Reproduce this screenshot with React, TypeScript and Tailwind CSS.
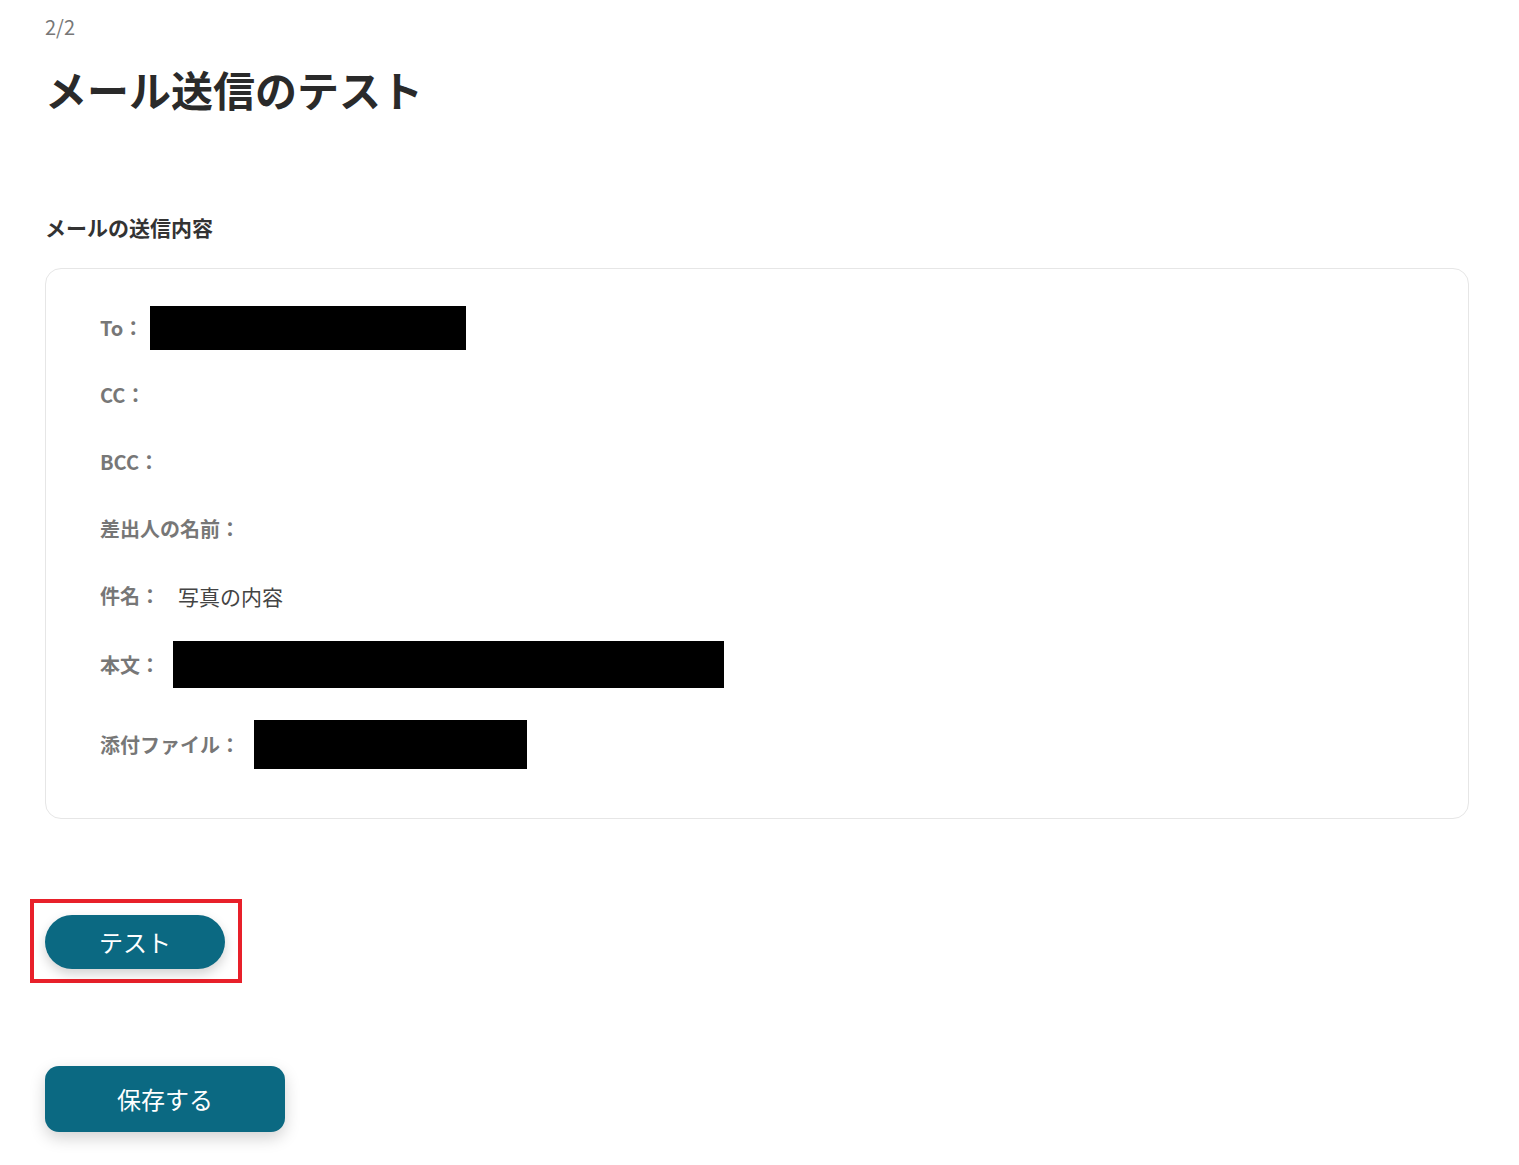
import React from 'react';

const font = { fontFamily: '"Noto Sans CJK JP", "Noto Sans", sans-serif' };

function Redacted({ w, h }: { w: number; h: number }) {
  return <div className="bg-black" style={{ width: w, height: h }} />;
}

export default function App() {
  const label = 'text-[20px] font-bold text-[#777777] leading-none whitespace-nowrap';

  return (
    <div className="min-h-[1165px] bg-white px-[45px] pt-[14px]" style={font}>
      <div className="text-[20px] leading-[26px] text-[#777777]">2/2</div>
      <h1 className="mt-[21px] text-[42px] font-bold leading-[56px] text-[#2a2a2a]">メール送信のテスト</h1>

      <h2 className="mt-[96px] text-[21px] font-bold leading-[28px] text-[#333333]">メールの送信内容</h2>

      <div className="mt-[27px] w-[1424px] rounded-[16px] border border-[#e6e6e6] px-[54px] pt-[37px] pb-[49px]">
        <div className="flex flex-col gap-[23px]">
          <div className="flex h-[44px] items-center">
            <span className={label}>To：</span>
            <div className="ml-[7px]"><Redacted w={316} h={44} /></div>
          </div>
          <div className="flex h-[44px] items-center">
            <span className={label}>CC：</span>
          </div>
          <div className="flex h-[44px] items-center">
            <span className={label}>BCC：</span>
          </div>
          <div className="flex h-[44px] items-center">
            <span className={label}>差出人の名前：</span>
          </div>
          <div className="flex h-[44px] items-center">
            <span className={label}>件名：</span>
            <span className="ml-[18px] text-[21px] leading-none text-[#444444]">写真の内容</span>
          </div>
          <div className="flex h-[47px] items-center">
            <span className={label}>本文：</span>
            <div className="ml-[13px]"><Redacted w={551} h={47} /></div>
          </div>
          <div className="mt-[9px] flex h-[49px] items-center">
            <span className={label}>添付ファイル：</span>
            <div className="ml-[14px]"><Redacted w={273} h={49} /></div>
          </div>
        </div>
      </div>

      <div className="mt-[80px] -ml-[15px] inline-block border-[4px] border-[#e8202a] pl-[11px] pr-[13px] pt-[12px] pb-[10px]">
        <button className="flex h-[54px] w-[180px] items-center justify-center rounded-full bg-[#0b6982] text-[24px] text-white shadow-[0_5px_12px_rgba(0,0,0,0.18)]">
          テスト
        </button>
      </div>

      <div className="mt-[83px]">
        <button className="flex h-[66px] w-[240px] items-center justify-center rounded-[14px] bg-[#0b6982] text-[24px] text-white shadow-[0_6px_16px_rgba(0,0,0,0.18)]">
          保存する
        </button>
      </div>
    </div>
  );
}
